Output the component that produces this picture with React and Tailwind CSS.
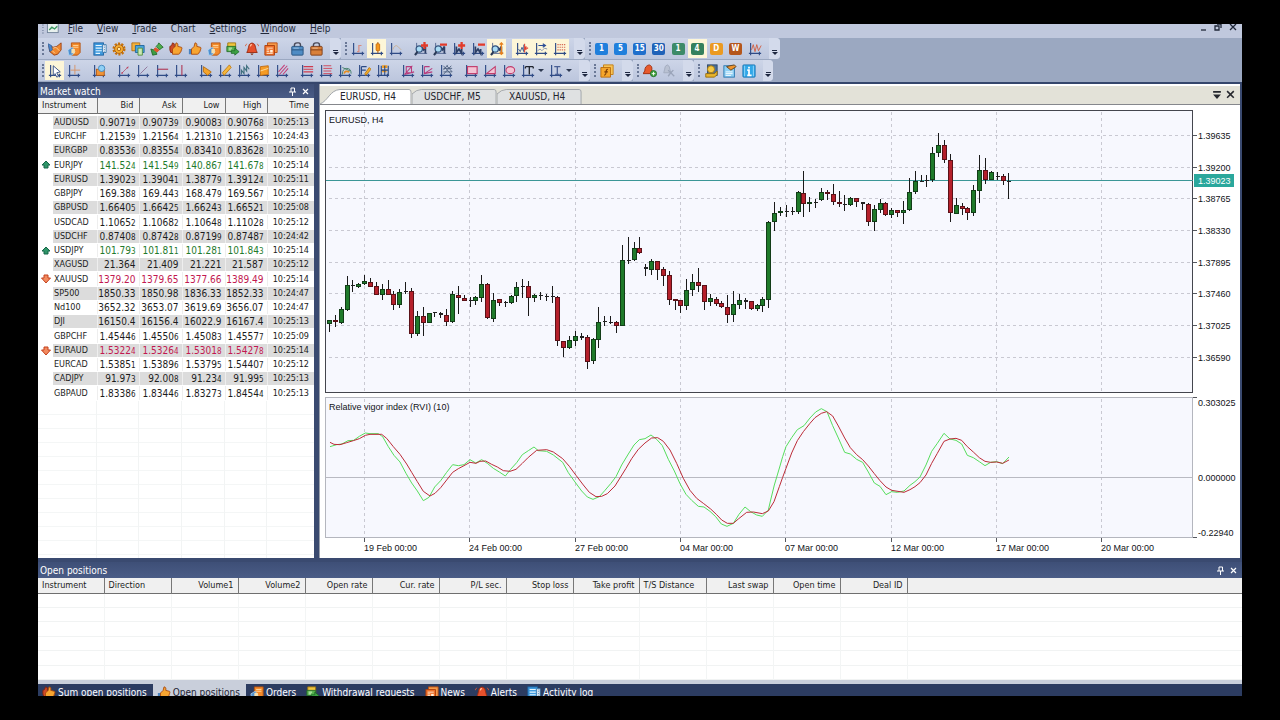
import { useState } from "react";
import clsx from "clsx";

const MENU = ["File", "View", "Trade", "Chart", "Settings", "Window", "Help"];

// symbol, bid, ask, low, high, time, direction, last digit drawn small
const QUOTES = [
  ["AUDUSD", "0.90719", "0.90739", "0.90083", "0.90768", "10:25:13", "", true],
  ["EURCHF", "1.21539", "1.21564", "1.21310", "1.21563", "10:24:43", "", true],
  ["EURGBP", "0.83536", "0.83554", "0.83410", "0.83628", "10:25:10", "", true],
  ["EURJPY", "141.524", "141.549", "140.867", "141.678", "10:25:14", "up", true],
  ["EURUSD", "1.39023", "1.39041", "1.38779", "1.39124", "10:25:11", "", true],
  ["GBPJPY", "169.388", "169.443", "168.479", "169.567", "10:25:14", "", true],
  ["GBPUSD", "1.66405", "1.66425", "1.66243", "1.66521", "10:25:08", "", true],
  ["USDCAD", "1.10652", "1.10682", "1.10648", "1.11028", "10:25:12", "", true],
  ["USDCHF", "0.87408", "0.87428", "0.87199", "0.87487", "10:24:42", "", true],
  ["USDJPY", "101.793", "101.811", "101.281", "101.843", "10:25:14", "up", true],
  ["XAGUSD", "21.364", "21.409", "21.221", "21.587", "10:25:12", "", false],
  ["XAUUSD", "1379.20", "1379.65", "1377.66", "1389.49", "10:25:14", "down", false],
  ["SP500", "1850.33", "1850.98", "1836.33", "1852.33", "10:24:47", "", false],
  ["Nd100", "3652.32", "3653.07", "3619.69", "3656.07", "10:24:47", "", false],
  ["DJI", "16150.4", "16156.4", "16022.9", "16167.4", "10:25:13", "", false],
  ["GBPCHF", "1.45446", "1.45506", "1.45083", "1.45577", "10:25:09", "", true],
  ["EURAUD", "1.53224", "1.53264", "1.53018", "1.54278", "10:25:14", "down", true],
  ["EURCAD", "1.53851", "1.53896", "1.53795", "1.54407", "10:25:12", "", true],
  ["CADJPY", "91.973", "92.008", "91.234", "91.995", "10:25:13", "", true],
  ["GBPAUD", "1.83386", "1.83446", "1.83273", "1.84544", "10:25:13", "", true],
];

const POSITION_COLS = [
  "Instrument", "Direction", "Volume1", "Volume2", "Open rate", "Cur. rate", "P/L sec.",
  "Stop loss", "Take profit", "T/S Distance", "Last swap", "Open time", "Deal ID",
];
const LEFT_COLS = ["Instrument", "Direction", "T/S Distance"];
const NARROW_COLS = ["Instrument", "Take profit"];

// bars: [color, body top, body bottom, high, low], measured in thirds from base
const CANDLES = [
  {
    base: 260,
    bars: [
      ["g", 181, 193, 181, 215], ["r", 181, 187, 165, 200], ["g", 148, 188, 140, 193], ["g", 76, 149, 48, 152],
      ["k", 75, 79, 60, 95], ["g", 73, 80, 70, 85], ["g", 64, 73, 45, 76], ["r", 65, 80, 55, 81],
      ["r", 79, 104, 67, 105], ["g", 87, 104, 73, 120], ["r", 87, 104, 60, 105], ["r", 103, 134, 93, 149],
      ["g", 97, 134, 88, 143], ["k", 94, 97, 67, 101], ["r", 93, 221, 84, 233], ["g", 169, 221, 152, 227],
      ["r", 169, 188, 140, 229], ["g", 160, 188, 158, 189], ["k", 157, 159, 157, 170], ["k", 159, 164, 157, 173],
      ["r", 166, 185, 147, 199], ["g", 102, 185, 93, 190], ["r", 105, 115, 77, 161], ["r", 115, 122, 105, 124],
      ["k", 121, 122, 110, 140], ["g", 112, 122, 108, 134], ["g", 72, 113, 46, 125], ["r", 73, 173, 69, 177],
      ["g", 121, 176, 100, 186], ["r", 117, 128, 116, 137], ["k", 127, 128, 123, 140], ["g", 107, 128, 105, 133],
      ["g", 81, 108, 66, 126], ["k", 78, 82, 57, 113], ["r", 79, 113, 64, 167], ["g", 105, 113, 102, 125],
      ["k", 106, 109, 96, 119], ["k", 109, 110, 102, 123], ["k", 109, 112, 79, 130], ["r", 112, 243, 107, 259],
    ],
  },
  {
    base: 220,
    bars: [
      ["r", 363, 383, 363, 410], ["g", 360, 384, 347, 387], ["g", 348, 362, 333, 377], ["k", 347, 353, 340, 361],
      ["r", 352, 425, 346, 448], ["g", 357, 422, 353, 433], ["g", 305, 359, 261, 383], ["k", 304, 305, 287, 319],
      ["k", 306, 308, 289, 312], ["r", 307, 317, 304, 338], ["g", 121, 317, 76, 319], ["k", 120, 122, 51, 132],
      ["g", 84, 119, 66, 122], ["r", 85, 99, 51, 101], ["k", 142, 146, 133, 167], ["g", 123, 149, 118, 164],
      ["r", 124, 149, 123, 179], ["r", 147, 167, 142, 199], ["r", 166, 239, 154, 256], ["r", 238, 243, 236, 269],
      ["r", 241, 258, 240, 278], ["g", 210, 258, 178, 269], ["g", 186, 211, 162, 227], ["r", 186, 197, 145, 217],
      ["r", 196, 246, 195, 269], ["g", 234, 246, 222, 257], ["r", 237, 251, 230, 258], ["r", 249, 262, 244, 265],
      ["r", 262, 284, 225, 309], ["g", 252, 284, 214, 305], ["g", 240, 254, 222, 268], ["k", 241, 245, 235, 266],
      ["r", 243, 266, 242, 270], ["g", 255, 266, 253, 274], ["g", 237, 258, 231, 277], ["g", 7, 239, 4, 264],
    ],
  },
  {
    base: 120,
    bars: [
      ["g", 279, 307, 246, 333], ["g", 273, 279, 261, 287], ["k", 274, 277, 255, 290], ["k", 273, 277, 262, 285],
      ["g", 216, 277, 213, 281], ["r", 219, 251, 153, 290], ["g", 245, 252, 232, 276], ["k", 246, 248, 238, 264],
      ["g", 216, 240, 204, 243], ["r", 216, 223, 210, 239], ["r", 222, 245, 192, 254], ["r", 246, 252, 213, 261],
      ["k", 252, 254, 225, 273], ["g", 235, 254, 232, 258], ["r", 235, 247, 233, 260], ["k", 247, 251, 245, 270],
      ["r", 251, 307, 250, 318], ["g", 268, 307, 255, 333], ["g", 250, 269, 237, 279], ["r", 250, 284, 245, 288],
      ["g", 270, 284, 265, 293], ["r", 271, 279, 270, 292], ["g", 270, 279, 243, 312], ["g", 216, 271, 175, 273],
      ["g", 182, 217, 154, 221], ["k", 182, 185, 165, 187], ["k", 179, 183, 165, 200], ["g", 99, 179, 80, 187],
      ["g", 75, 100, 40, 111], ["r", 76, 121, 60, 130], ["r", 121, 280, 102, 307], ["g", 256, 281, 233, 283],
      ["r", 258, 266, 248, 285], ["r", 265, 279, 261, 299], ["g", 211, 279, 195, 287], ["g", 151, 212, 105, 248],
      ["r", 151, 179, 114, 191], ["g", 156, 179, 154, 181], ["k", 169, 172, 157, 181], ["r", 169, 184, 162, 194],
      ["k", 182, 184, 160, 236],
    ],
  },
];

const BARS = CANDLES.flatMap(({ base, bars }) =>
  bars.map(([color, ...ys]) => [color, ...ys.map((y) => Math.round(base + y / 3))])
);

const RVI =
  "30,170 50,164 66,162 84,152 101,151 118,139 136,129 150,131 175,131 188,140 205,170 222,196 240,216 258,250 275,279 292,303 310,332 327,322 344,291 362,272 380,247 398,224 415,227 432,224 450,209 467,219 485,209 502,220 520,235 538,246 556,258 572,238 590,218 607,194 625,182 642,171 655,182 680,184 700,195 728,217 745,248 765,276 785,303 802,321 819,328 838,320 855,301 872,281 888,260 905,225 925,192 942,165 958,149 975,146 993,135 1010,148 1027,167 1045,208 1063,243 1080,281 1098,313 1115,331 1135,349 1152,351 1170,364 1187,380 1204,402 1221,409 1240,400 1257,373 1275,351 1292,365 1310,375 1327,379 1345,360 1352,330 1363,285 1372,255 1380,228 1388,200 1398,170 1415,143 1432,119 1452,107 1470,84 1487,66 1504,56 1521,65 1538,107 1555,144 1574,187 1591,192 1610,208 1628,217 1645,246 1663,279 1680,289 1698,314 1715,305 1732,307 1752,303 1770,286 1785,275 1800,261 1818,225 1835,184 1852,160 1872,130 1890,147 1908,151 1925,162 1942,196 1960,203 1978,215 1995,227 2012,217 2030,215 2048,221 2067,201";
const RVI_SIGNAL =
  "30,157 42,163 60,164 80,158 100,152 118,146 136,136 150,133 185,133 200,145 220,170 240,193 260,222 275,247 292,275 310,304 330,318 345,310 362,293 380,270 398,247 415,236 432,227 450,217 468,220 480,214 497,213 515,223 532,231 550,242 570,244 588,238 607,220 625,202 650,181 680,179 700,186 728,206 748,229 768,256 790,285 808,307 828,320 845,319 862,311 885,288 900,264 918,235 935,206 955,178 975,159 995,144 1013,143 1030,154 1050,180 1070,220 1090,265 1110,301 1130,325 1150,340 1172,357 1190,374 1205,390 1222,400 1240,400 1255,387 1280,367 1300,366 1327,371 1345,363 1362,335 1378,290 1388,262 1398,235 1415,189 1432,152 1450,125 1470,100 1485,83 1504,70 1520,65 1538,78 1555,108 1574,144 1591,173 1610,194 1628,209 1645,228 1663,251 1680,272 1698,291 1715,301 1752,307 1770,299 1785,290 1800,278 1818,255 1835,220 1852,190 1872,154 1890,147 1908,145 1925,151 1942,170 1960,186 1978,203 1995,214 2012,217 2030,216 2048,220 2067,210";

const PRICES = [
  [135, "1.39635"], [167, "1.39200"], [198, "1.38765"], [230, "1.38330"],
  [262, "1.37895"], [293, "1.37460"], [325, "1.37025"], [357, "1.36590"],
];
const DATES = [
  [364, "19 Feb 00:00"], [469, "24 Feb 00:00"], [575, "27 Feb 00:00"], [680, "04 Mar 00:00"],
  [785, "07 Mar 00:00"], [891, "12 Mar 00:00"], [996, "17 Mar 00:00"], [1101, "20 Mar 00:00"],
];

/* ---------- icons ---------- */

const Axes = () => <path d="M3 1v14M1 13h14M13 11v4" fill="none" stroke="#2f4b86" strokeWidth="1.3" />;
const Lens = () => (
  <>
    <path d="M3 1v14M1 13h14" fill="none" stroke="#4a5f8c" />
    <path d="M9 6l2 3 2-4v8" fill="none" stroke="#2c3f66" strokeWidth="2" />
    <circle cx="6" cy="8" r="3.6" fill="#a9dcf5" stroke="#33527d" strokeWidth="1.4" />
    <path d="M4 11l-3 4" stroke="#2b3a55" strokeWidth="2" />
  </>
);
const Thumb = () => (
  <path d="M4 14V8l3-3 1-4c2 0 2.500 1.500 2 4l4 1c1.500.500 1 2 0 2 1 1 .500 2-.500 2 .500 1 0 2-1 2 0 1-.500 2-2 2z" fill="#f7a531" stroke="#a9480c" />
);
const Doc = () => (
  <>
    <path d="M5 1h10v11l-3 3H5z" fill="#f28a2c" stroke="#b4500f" />
    <path d="M7 4h6M7 6h6" stroke="#ffd9a0" />
    <path d="M1 9l5-3 3 5-3 4H2z" fill="#4d8fd0" stroke="#b8dcf5" strokeWidth=".8" />
    <path d="M5 8h4v5H5z" fill="#f5dfae" />
  </>
);
const Bag = ({ fill, dark }) => (
  <>
    <path d="M5 6V4q0-3 3-3h2q2 0 2 3v2" fill="none" stroke="#4a4a58" strokeWidth="1.6" />
    <rect x="2" y="5" width="13" height="10" rx="1" fill={fill} stroke={dark} />
    <path d="M2 9h13" stroke={dark} />
    <path d="M4 7h6" stroke="#fff" opacity=".5" />
  </>
);

const ICONS = {
  handshake: (
    <>
      <path d="M1 4l5 2 4-1 5-4v8l-4 5-4 1-5-4z" fill="#f0882f" stroke="#9c3f10" />
      <path d="M0 2l4 2 1 5-3 2z" fill="#4a86cc" stroke="#285590" strokeWidth=".7" />
      <path d="M6 7l3-1 4 4M5 10l3 3" fill="none" stroke="#ffd59b" />
    </>
  ),
  doc: <Doc />,
  list: (
    <>
      <rect x="1" y="1" width="11" height="14" fill="#3f9ade" stroke="#1b609f" />
      <path d="M3 4h7M3 7h7M3 10h7M3 13h5" stroke="#e6f6ff" strokeWidth="1.4" />
      <path d="M11 3h4v9h-4z" fill="#f4f6fb" stroke="#3777ab" />
      <path d="M13 4v7" stroke="#3777ab" strokeDasharray="1 1" />
    </>
  ),
  gear: (
    <>
      <circle cx="8" cy="8" r="6.200" fill="none" stroke="#c77108" strokeWidth="2.500" strokeDasharray="2.400 1.500" />
      <circle cx="8" cy="8" r="5" fill="#f7b02f" stroke="#a8590a" />
      <circle cx="8" cy="8" r="2" fill="#ffe9a3" stroke="#a8590a" />
    </>
  ),
  copy: (
    <>
      <path d="M1 1h9v9H1z" fill="#f3b23c" stroke="#b06f10" />
      <path d="M5 4h10v8H5z" fill="#4aa4dd" stroke="#1d639c" />
      <path d="M8 7h5v8H8z" fill="#cbe8b4" stroke="#4d8d3c" />
    </>
  ),
  swap: (
    <>
      <path d="M10 1l5 5-2 1-2 2-4-4 2-2z" fill="#4fae4c" stroke="#246a2a" />
      <path d="M1 8l3 1 2-2 3 3-2 2 1 2-5 1z" fill="#3f9d45" stroke="#246a2a" />
      <path d="M6 6l5 3-3 3-4-3z" fill="#e3552d" />
    </>
  ),
  thumbs: (
    <>
      <path d="M1 9V5l2-1 1-3 2 1v3l3 1v6H2z" fill="#cf4a28" stroke="#86230c" />
      <Thumb />
    </>
  ),
  thumb: (
    <>
      <path d="M1 8h3v6H1z" fill="#4b83bf" />
      <Thumb />
    </>
  ),
  money: (
    <>
      <path d="M2 1h9v7H2z" fill="#f0c53d" stroke="#9b7410" />
      <path d="M1 5h10v6H1z" fill="#55b04d" stroke="#236b28" />
      <path d="M3 7h4M3 9h3" stroke="#e6ffd8" />
      <path d="M6 10h4V7l5 4-5 4v-2H6z" fill="#3da144" stroke="#176022" strokeWidth=".8" />
    </>
  ),
  bell: (
    <>
      <path d="M8 1q4 1 4 5l1 4 1 2H2l1-2 1-4q0-4 4-5z" fill="#e5502c" stroke="#96270d" />
      <path d="M6 5q0-2 2-2" fill="none" stroke="#ffc2a0" strokeWidth="1.300" />
      <path d="M6 13h4l-2 2z" fill="#7d2d10" />
      <path d="M2 2L0 5M14 2l2 3" stroke="#d85c37" />
    </>
  ),
  news: (
    <>
      <path d="M4 1h11v11H4z" fill="#f59a4a" stroke="#b8490f" />
      <path d="M1 4h11v11H1z" fill="#ef7029" stroke="#a83c0b" />
      <path d="M3 7h7M3 9h3M3 11h3M3 13h7" stroke="#fff0dc" />
      <path d="M7 9h3v3H7z" fill="#fff0dc" />
    </>
  ),
  bagBlue: <Bag fill="#4f8cc4" dark="#25507c" />,
  bagBrown: <Bag fill="#d9803a" dark="#7a3912" />,
  barChart: <><Axes /><path d="M7 11h2V4h3" fill="none" stroke="#d98b7f" strokeWidth="1.400" /></>,
  candleChart: <><Axes /><path d="M9 0v13" stroke="#9c4c05" /><rect x="7" y="2" width="4" height="8" rx="1" fill="#f6981c" stroke="#c76a08" /></>,
  lineChart: <><Axes /><path d="M4 9q3-7 6-4l4 4" fill="none" stroke="#c9ae90" /></>,
  zoomIn: <><Lens /><path d="M12 0v8M8 4h8" stroke="#e23b2b" strokeWidth="2.600" /></>,
  zoomOut: <><Lens /><path d="M8 3h8" stroke="#e23b2b" strokeWidth="2.600" /></>,
  barsIn: <><Axes /><path d="M5 5v7l3-4 3 5V8" fill="none" stroke="#2c3f66" strokeWidth="2" /><path d="M11 0v8M7 4h8" stroke="#e23b2b" strokeWidth="2.600" /></>,
  barsOut: <><Axes /><path d="M5 5v7l3-4 3 5V8" fill="none" stroke="#2c3f66" strokeWidth="2" /><path d="M8 3h8" stroke="#e23b2b" strokeWidth="2.600" /></>,
  zoomFit: <><Lens /><path d="M13 1v13M11 3l2-2 2 2M11 12l2 2 2-2" fill="none" stroke="#e8801d" strokeWidth="1.500" /></>,
  shift: <><Axes /><path d="M4 8l2 3 2-5 2 5V3" fill="none" stroke="#35528c" /><path d="M11 2v10M15 7h-4M13 5l-2 2 2 2" fill="none" stroke="#df4030" strokeWidth="1.200" /></>,
  scroll: <><Axes /><path d="M4 10l3-2 2 2 3-3 3 1" fill="none" stroke="#7b8db4" /><path d="M5 4h7M10 2l3 2-3 2" fill="none" stroke="#2b4d95" strokeWidth="1.400" /></>,
  grid: <><Axes /><path d="M5 3h10M5 6h10M5 9h10" stroke="#d56a55" strokeWidth="1.300" strokeDasharray="1.500 1" /></>,
  indicator: <><Axes /><path d="M4 9l2-6 2 8 2-8 2 7 3-6" fill="none" stroke="#d05a3d" /></>,
  cursor: <><Axes /><path d="M6 2l8 7-4 1 2 4-2 1-2-4-2 2z" fill="#fff" stroke="#2c467f" /></>,
  cross: <><Axes /><path d="M9 1v11M4 7h11" stroke="#d99060" /></>,
  object: <><Axes /><rect x="5" y="6" width="9" height="7" fill="#f19436" stroke="#b35a10" /><circle cx="11" cy="5" r="3.600" fill="#8fd0f5" stroke="#3f84bb" /></>,
  trend: <><Axes /><path d="M5 11l8-8" stroke="#b0607c" /><circle cx="6" cy="10" r="1" fill="#c04560" /><circle cx="12" cy="4" r="1" fill="#c04560" /></>,
  ray: <><Axes /><path d="M5 11l8-8" stroke="#8b6f95" /></>,
  hline: <><Axes /><path d="M3 6h12" stroke="#b03d5a" strokeWidth="1.300" /></>,
  vline: <><Axes /><path d="M9 1v12" stroke="#b03d5a" strokeWidth="1.300" /></>,
  pencil: <><Axes /><path d="M5 3l9 6-4 4-5-4z" fill="#f5a42b" stroke="#b36a0c" /></>,
  channel: <><Axes /><path d="M5 10l8-9 2 3-8 9z" fill="#f5b73d" stroke="#c07a10" /></>,
  stdev: <><Axes /><path d="M5 12V7l3 4V4l3 4V2l3 4" fill="none" stroke="#3e6e7d" strokeWidth="1.300" /></>,
  orangeBox: <><Axes /><path d="M5 3l9-1v10l-9 1z" fill="#f59b24" stroke="#c1690c" /><path d="M5 8l9-3" stroke="#ffe0a5" /></>,
  pitchfork: <><Axes /><path d="M4 9l7-8M5 12l9-10M9 12l6-7" stroke="#c43f78" strokeWidth="1.200" /></>,
  fibo: <><Axes /><path d="M4 3h11M4 6h11M4 9h11" stroke="#cf3a4e" strokeWidth="1.300" /></>,
  fiboExt: <><Axes /><path d="M5 2h9M5 5h10M5 8h9M5 11h10" stroke="#cf3a4e" /></>,
  fiboArc: <><Axes /><path d="M5 12q0-7 5-7t5 6M5 4l9 4" fill="none" stroke="#3f7d63" /><path d="M7 11q1-4 6-2" fill="none" stroke="#e78c21" strokeWidth="2" /></>,
  fiboFan: <><Axes /><path d="M5 3h6M5 7h5M5 3v9" stroke="#2a4a86" strokeWidth="1.400" /><path d="M9 11l5-7 2 2-6 7z" fill="#f5b02b" stroke="#b8750e" /></>,
  fiboTime: <><Axes /><path d="M7 3h6M7 8h5" stroke="#f39c1f" strokeWidth="3" /><path d="M6 2v11M10 2v11M14 2v11M6 7h8" stroke="#26467f" strokeWidth="1.200" /></>,
  gannFan: <><Axes /><path d="M4 12L13 2M4 12l11-3M6 3h6v7H6z" fill="none" stroke="#b83b7c" strokeWidth="1.200" /></>,
  gannLine: <><Axes /><path d="M5 3h6M5 3v8l9-6M5 11l9-2" fill="none" stroke="#b83b7c" strokeWidth="1.200" /></>,
  gannGrid: <><Axes /><path d="M5 2l9 10M9 2l6 7M14 2l-9 10M10 1l-5 6M5 5h10M5 9h10" stroke="#4a5e7d" /></>,
  rect: <><Axes /><rect x="4" y="3" width="11" height="8" fill="#f3c3d4" stroke="#c13a6a" strokeWidth="1.300" /></>,
  triangle: <><Axes /><path d="M4 11L14 3v8z" fill="#f3c3d4" stroke="#c13a6a" strokeWidth="1.200" /></>,
  ellipse: <><Axes /><ellipse cx="9.500" cy="7" rx="5" ry="4" fill="#f3c3d4" stroke="#c13a6a" strokeWidth="1.200" /></>,
  textTool: <><Axes /><path d="M5 3h9M9.500 3v9M5 3v2M14 3v2" stroke="#20242e" strokeWidth="1.500" /></>,
  markTool: <><Axes /><path d="M6 3h7M9.500 3v9M7 12h5" stroke="#4a5f94" strokeWidth="1.500" /></>,
  script: (
    <>
      <path d="M4 1h11v11H4z" fill="#f8c457" stroke="#c07c10" />
      <path d="M1 4h11v11H1z" fill="#f5a62c" stroke="#b86a0a" />
      <path d="M9 6q-2 0-2 3t-2 4M5 9h4" fill="none" stroke="#7a3b05" strokeWidth="1.300" />
    </>
  ),
  alertAdd: (
    <>
      <path d="M7 1q4 1 3 6l2 4H0l2-3q0-6 5-7z" fill="#e85a2d" stroke="#9c2c0d" />
      <circle cx="12" cy="11" r="3.500" fill="#46a843" stroke="#1f6a26" />
      <path d="M12 9v4M10 11h4" stroke="#fff" />
    </>
  ),
  alertOff: (
    <>
      <path d="M6 1q3 1 3 5l1 4H2l1-4q0-4 3-5z" fill="#b9c1d2" stroke="#a0a9bd" />
      <path d="M7 7l3 3 3-3M10 10l4 4M10 10l-3 4" fill="none" stroke="#9aa4b9" strokeWidth="1.500" />
    </>
  ),
  user: (
    <>
      <rect x="4" y="1" width="11" height="12" fill="#4d6f95" stroke="#2b4669" />
      <circle cx="8" cy="6" r="4" fill="#f5c945" stroke="#a8780c" />
      <path d="M2 11h10l3-3v4l-3 3H2z" fill="#e9b52c" stroke="#94690b" />
    </>
  ),
  report: (
    <>
      <rect x="1" y="2" width="12" height="13" fill="#8fd0f5" stroke="#2573ad" />
      <path d="M3 9h8M3 11h8M3 13h6" stroke="#fff" />
      <path d="M4 3l5 4 6-4-2-2-5 1z" fill="#f0952f" stroke="#5b4020" />
    </>
  ),
  info: (
    <>
      <rect x="1" y="1" width="14" height="14" rx="1" fill="#31a7e8" stroke="#1b76b5" />
      <path d="M3 2v12M13 2v12" stroke="#9adcfb" />
      <path d="M8 3v2M6 7h2v6M6 13h5" fill="none" stroke="#fff" strokeWidth="2" />
    </>
  ),
};

function Icon({ name }) {
  return (
    <svg viewBox="0 0 16 16" className="block size-[14px] shrink-0" aria-hidden="true">
      {ICONS[name]}
    </svg>
  );
}

/* ---------- toolbars ---------- */

const PERIODS = [
  ["1", "bg-[#1f7fdc]"], ["5", "bg-[#1f7fdc]"], ["15", "bg-[#1f6fcc]"], ["30", "bg-[#1f62b8]"],
  ["1", "bg-[#3c8a68]"], ["4", "bg-[#35805c]"], ["D", "bg-[#eb9a22]"], ["W", "bg-[#b4561c]"],
];

function ToolButton({ name, active, menu, children }) {
  return (
    <button
      type="button"
      aria-label={name}
      className={clsx("flex h-[19px] items-center justify-center", menu ? "w-7 gap-[3px]" : "w-[19px]", active && "bg-[#fdf6d8]")}
    >
      {children || <Icon name={name} />}
      {menu && <span className="border-x-[3px] border-t-[3px] border-x-transparent border-t-[#2d3850]" />}
    </button>
  );
}

function Toolbar({ width, label, children }) {
  return (
    <div role="toolbar" aria-label={label} className={clsx("flex h-[21px] shrink-0 rounded-r bg-linear-to-b from-[#cdd5e8] to-[#bcc6dd]", width)}>
      <span className="my-1 ml-1 mr-px w-0 border-l-2 border-dotted border-[#6a7896]" />
      <div className="flex flex-1 items-center justify-between">{children}</div>
      <button type="button" aria-label={label + " options"} className="ml-[5px] flex w-[11px] flex-col items-center justify-end gap-px rounded-r bg-[#d3daeb] pb-1">
        <span className="h-px w-[5px] bg-[#1e2740]" />
        <span className="border-x-[3px] border-t-[3px] border-x-transparent border-t-[#1e2740]" />
      </button>
    </div>
  );
}

function Group({ names, active = [] }) {
  return (
    <div className="flex">
      {names.map((n) => (
        <ToolButton key={n} name={n} active={active.includes(n)} />
      ))}
    </div>
  );
}

function Toolbars() {
  return (
    <div className="flex shrink-0 flex-col gap-px border-b-2 border-[#35466c] bg-[#9ba8c1] pb-px">
      <div className="flex">
        <Toolbar width="w-[303px]" label="Trade">
          <Group names={["handshake", "doc"]} />
          <Group names={["list", "gear", "copy", "swap", "thumbs", "thumb", "doc", "money", "bell", "news"]} />
          <Group names={["bagBlue", "bagBrown"]} />
        </Toolbar>
        <Toolbar width="w-[244px]" label="Chart">
          <Group names={["barChart", "candleChart", "lineChart"]} active={["candleChart"]} />
          <Group names={["zoomIn", "zoomOut", "barsIn", "barsOut", "zoomFit"]} active={["zoomFit"]} />
          <Group names={["shift", "scroll", "grid"]} active={["shift", "scroll", "grid"]} />
        </Toolbar>
        <Toolbar width="w-[195px]" label="Period">
          {PERIODS.map(([text, color], i) => (
            <ToolButton key={i} name={"Period " + text} active={i === 5}>
              <span className={clsx("flex h-3 w-[13px] items-center justify-center rounded-xs text-[8px] font-bold leading-none text-white", color)}>
                {text}
              </span>
            </ToolButton>
          ))}
          <ToolButton name="indicator" />
        </Toolbar>
      </div>
      <div className="flex">
        <Toolbar width="w-[552px]" label="Drawing">
          <Group names={["cursor", "cross"]} active={["cursor"]} />
          <Group names={["object"]} />
          <Group names={["trend", "ray", "hline", "vline"]} />
          <Group names={["pencil", "channel", "stdev", "orangeBox", "pitchfork"]} />
          <Group names={["fibo", "fiboExt", "fiboArc", "fiboFan", "fiboTime"]} />
          <Group names={["gannFan", "gannLine", "gannGrid"]} />
          <div className="flex">
            <ToolButton name="rect" />
            <ToolButton name="triangle" />
            <ToolButton name="ellipse" />
            <ToolButton name="textTool" menu />
            <ToolButton name="markTool" menu />
          </div>
        </Toolbar>
        <Toolbar width="w-[43px]" label="Scripts">
          <Group names={["script"]} />
        </Toolbar>
        <Toolbar width="w-[61px]" label="Alerts">
          <Group names={["alertAdd", "alertOff"]} />
        </Toolbar>
        <Toolbar width="w-[79px]" label="Account">
          <Group names={["user", "report", "info"]} />
        </Toolbar>
      </div>
    </div>
  );
}

function MenuBar() {
  return (
    <header className="flex h-[14px] shrink-0 items-start justify-between bg-[#c0c8dd]">
      <nav className="flex pl-1 text-[10px] leading-[8px]">
        <svg viewBox="0 0 20 10" className="mr-2 h-[10px] w-[18px]" aria-hidden="true">
          <path d="M1 0v10" stroke="#7a87a3" strokeWidth="2" strokeDasharray="1 2" />
          <rect x="6" y="-4" width="12" height="13" fill="#e8f0ee" stroke="#6f8098" />
          <path d="M8 6l3-3 3 2 3-3" fill="none" stroke="#3b9960" strokeWidth="1.500" />
        </svg>
        {MENU.map((m) => (
          <button key={m} type="button" className="mr-[14px] whitespace-nowrap">
            {m === "Chart" ? m : <><u>{m[0]}</u>{m.slice(1)}</>}
          </button>
        ))}
      </nav>
      <div className="flex gap-[6px] pr-1">
        {[["Minimize", "M2 6h5"], ["Restore", "M3 0h4v4M1 2h4v4H1z"], ["Close", "M1 0l6 6M7 0L1 6"]].map(([name, d]) => (
          <button key={name} type="button" aria-label={name}>
            <svg viewBox="0 0 9 9" className="block size-[9px]">
              <path d={d} fill="none" stroke="#1f2738" strokeWidth="1.300" />
            </svg>
          </button>
        ))}
      </div>
    </header>
  );
}

function PanelTitle({ children, className }) {
  return (
    <div className={clsx("flex shrink-0 items-center bg-linear-to-b from-[#3e4f77] to-[#4a5c86] pl-[2px] pr-1 text-[10px] text-white", className)}>
      <h2 className="flex-1">{children}</h2>
      <button type="button" aria-label="Pin" className="mr-1">
        <svg viewBox="0 0 9 9" className="block size-[9px]">
          <path d="M3 1h3.500v4M3 1v4M1 5h7M4.500 5v4" fill="none" stroke="#fff" />
        </svg>
      </button>
      <button type="button" aria-label="Close">
        <svg viewBox="0 0 9 9" className="block size-[9px]">
          <path d="M2 2l5 5M7 2L2 7" stroke="#fff" strokeWidth="1.200" />
        </svg>
      </button>
    </div>
  );
}

/* ---------- market watch ---------- */

function Arrow({ dir }) {
  if (!dir) return null;
  const up = dir === "up";
  return (
    <svg viewBox="0 0 10 10" className="block size-[10px]" role="img" aria-label={dir}>
      <path
        d={up ? "M5 1l4 4H7v3H3V5H1z" : "M3 1h4v3h2.500L5 9 .5 4H3z"}
        fill={up ? "#2f9668" : "#f28a5f"}
        stroke={up ? "#17674a" : "#c4401c"}
      />
    </svg>
  );
}

function Price({ value, small }) {
  if (!small) return value;
  return <>{value.slice(0, -1)}<span className="text-[8px] leading-none">{value.slice(-1)}</span></>;
}

function MarketWatch() {
  const cols = ["Bid", "Ask", "Low", "High", "Time"];
  return (
    <section className="flex w-[276px] shrink-0 flex-col bg-white">
      <PanelTitle className="h-[14px]">Market watch</PanelTitle>
      <table className="w-full table-fixed border-collapse text-[9px] leading-[11px] text-[#1c1c1c]">
        <colgroup>
          <col className="w-[15px]" />
          <col className="w-[44px]" />
          <col className="w-[42px]" />
          <col className="w-[43px]" />
          <col className="w-[43px]" />
          <col className="w-[42px]" />
          <col />
        </colgroup>
        <thead>
          <tr className="h-[15px] border-b border-[#6f6f6f] bg-[#f0f0f0]">
            <th colSpan={2} className="border-r border-[#777] p-0 pl-1 pt-px text-left font-normal">Instrument</th>
            {cols.map((c) => (
              <th key={c} className="border-r border-[#777] p-0 pr-[5px] pt-px text-right font-normal last:border-r-0">{c}</th>
            ))}
          </tr>
        </thead>
        <tbody className="before:block before:h-[2px]">
          {QUOTES.map(([symbol, bid, ask, low, high, time, dir, small], i) => (
            <tr key={symbol} className={clsx(i % 4 === 3 ? "h-[15px]" : "h-[14px]", dir === "up" && "text-[#1f7a2c]", dir === "down" && "text-[#c2184f]")}>
              <td className="p-0 pl-[3px]"><Arrow dir={dir} /></td>
              <td className={clsx("border-y border-white p-0 pl-px text-[#1c1c1c]", i % 2 === 0 && "bg-[#dcdcdc]")}>{symbol}</td>
              {[bid, ask, low, high].map((v, k) => (
                <td key={k} className={clsx("border-y border-l border-y-white border-l-[#eeeeee] p-0 pr-[3px] text-right text-[10px]", i % 2 === 0 && "bg-[#dcdcdc]")}>
                  <Price value={v} small={small} />
                </td>
              ))}
              <td className={clsx("border-y border-l border-y-white border-l-[#eeeeee] p-0 pr-[5px] text-right text-[#1c1c1c]", i % 2 === 0 && "bg-[#dcdcdc]")}>{time}</td>
            </tr>
          ))}
        </tbody>
      </table>
      <div className="flex flex-1 bg-[repeating-linear-gradient(to_bottom,#fff_0_13px,#f4f6f6_13px_14px)]">
        <span className="w-[59px] border-r border-[#f2f4f4]" />
        <span className="w-[42px] border-r border-[#f2f4f4]" />
        <span className="w-[43px] border-r border-[#f2f4f4]" />
        <span className="w-[43px] border-r border-[#f2f4f4]" />
        <span className="w-[42px] border-r border-[#f2f4f4]" />
      </div>
    </section>
  );
}

/* ---------- chart ---------- */

const BODY = { g: "#1f7a2a", r: "#b5202b", k: "#222" };

function PriceChart() {
  return (
    <svg
      viewBox="320 106 920 450"
      preserveAspectRatio="xMinYMin meet"
      className="mt-px block min-h-0 w-full flex-1 bg-white font-['Liberation_Sans',sans-serif] text-[9px]"
      role="img"
      aria-label="EURUSD, H4 with relative vigor index"
    >
      <g fill="#f7f8fe">
        <rect x="325.5" y="110.5" width="867" height="282" stroke="#44464e" />
        <rect x="325.5" y="397.5" width="867" height="140" stroke="#b4b6be" />
      </g>

      <g stroke="#c9c9d2" strokeDasharray="3 3">
        {PRICES.map(([y]) => <path key={y} d={`M329 ${y + 0.5}H1192`} />)}
        {DATES.map(([x]) => <path key={x} d={`M${x + 0.5} 112V392M${x + 0.5} 399V537`} />)}
      </g>
      <path d="M326 477.5H1192" stroke="#b9bac2" />
      <path d="M326 180.5H1193" stroke="#3b9696" />

      {BARS.map(([color, top, bottom, high, low], i) => {
        const x = Math.round(329 + i * 5.857);
        return (
          <g key={i} shapeRendering="crispEdges">
            <path d={`M${x + 0.5} ${high}V${low}`} stroke="#1a1a1a" />
            {color === "k" ? (
              <rect x={x - 1} y={top} width="4" height={Math.max(1, bottom - top)} fill="#222" />
            ) : (
              <rect x={x - 1.5} y={top + 0.5} width="4" height={Math.max(1, bottom - top - 1)} fill={BODY[color]} stroke={color === "g" ? "#123d17" : "#5a1218"} />
            )}
          </g>
        );
      })}

      <g transform="translate(320 390) scale(.33333)" fill="none" strokeWidth="3">
        <polyline points={RVI} stroke="#55dd5b" />
        <polyline points={RVI_SIGNAL} stroke="#bb2b37" />
      </g>

      <g stroke="#55575e">
        {PRICES.map(([y]) => <path key={y} d={`M1193 ${y + 0.5}h4`} />)}
        {DATES.map(([x]) => <path key={x} d={`M${x + 0.5} 538v4`} />)}
        <path d="M1193 397.5h4M1193 537.5h4" />
      </g>

      <g fill="#111318">
        <text x="329" y="123">EURUSD, H4</text>
        <text x="329" y="410">Relative vigor index (RVI) (10)</text>
        {PRICES.map(([y, label]) => <text key={y} x="1198" y={y + 4}>{label}</text>)}
        {DATES.map(([x, label]) => <text key={x} x={x} y="551">{label}</text>)}
        <text x="1198" y="406">0.303025</text>
        <text x="1198" y="481">0.000000</text>
        <text x="1198" y="536">-0.22940</text>
      </g>
      <rect x="1194" y="174" width="40" height="13" fill="#2aa79c" />
      <text x="1198" y="184" fill="#fff">1.39023</text>
    </svg>
  );
}

function ChartTabs() {
  const [current, setCurrent] = useState("EURUSD, H4");
  return (
    <div className="flex h-[19px] shrink-0 items-end border-b border-[#85878c] bg-[#e3e2d8]">
      {["EURUSD, H4", "USDCHF, M5", "XAUUSD, H4"].map((t, i) => (
        <button
          key={t}
          type="button"
          onClick={() => setCurrent(t)}
          className={clsx("relative h-[15px] text-left text-[10px] leading-[12px] text-[#22242c]", i === 0 ? "w-[92px] pl-5" : "w-[85px] pl-3")}
        >
          <svg viewBox="0 0 92 15" preserveAspectRatio="none" className="absolute inset-0 size-full" aria-hidden="true">
            <path
              d={i === 0 ? "M0 15C8 12 10 1 20 .500H89Q91 .500 91 3V15" : "M0 15V5Q5 .500 10 .500H89Q91 .500 91 3V15"}
              fill={current === t ? "#fff" : "#dfe1e2"}
              stroke="#a1a5aa"
            />
          </svg>
          <span className="relative">{t}</span>
        </button>
      ))}
      <div className="ml-auto flex gap-1 pb-1 pr-1">
        <button type="button" aria-label="Chart list">
          <svg viewBox="0 0 9 9" className="block size-[10px]"><path d="M1 1h7v1.500H1zM1 4h7L4.500 8z" fill="#26282e" /></svg>
        </button>
        <button type="button" aria-label="Close chart">
          <svg viewBox="0 0 9 9" className="block size-[10px]"><path d="M1 1l6 6M7 1L1 7" stroke="#26282e" strokeWidth="1.400" /></svg>
        </button>
      </div>
    </div>
  );
}

/* ---------- open positions ---------- */

const DOCK_TABS = [
  ["thumbs", "Sum open positions"], ["thumb", "Open positions"], ["doc", "Orders"], ["money", "Withdrawal requests"],
  ["news", "News"], ["bell", "Alerts"], ["list", "Activity log"],
];

function OpenPositions() {
  const [tab, setTab] = useState("Open positions");
  return (
    <section className="flex h-[138px] shrink-0 flex-col overflow-hidden border-t-4 border-[#3a4a70]">
      <PanelTitle className="h-4">Open positions</PanelTitle>
      <div className="h-[102px] shrink-0 bg-white">
        <table className="h-[102px] w-full table-fixed border-collapse text-[9px] leading-[11px] text-[#1c1c1c]">
          <thead>
            <tr className="h-[15px] border-b border-[#6f6f6f] bg-[#f0f0f0]">
              {POSITION_COLS.map((c) => (
                <th
                  key={c}
                  className={clsx(
                    "whitespace-nowrap border-r border-[#777] p-0 pt-px font-normal",
                    NARROW_COLS.includes(c) ? "w-[66px]" : "w-[67px]",
                    LEFT_COLS.includes(c) ? "pl-1 text-left" : "pr-1 text-right"
                  )}
                >
                  {c}
                </th>
              ))}
              <th className="p-0" />
            </tr>
          </thead>
          <tbody>
            {[1, 2, 3, 4, 5, 6].map((r) => (
              <tr key={r} className="border-b border-[#f1f3f3]">
                {POSITION_COLS.map((c) => <td key={c} className="border-r border-[#f3f5f5] p-0" />)}
                <td className="p-0" />
              </tr>
            ))}
          </tbody>
        </table>
      </div>
      <div className="flex h-4 shrink-0 border-t-4 border-[#c9cfdb] bg-[#2c3c61]">
        {DOCK_TABS.map(([icon, name]) => (
          <button
            key={name}
            type="button"
            onClick={() => setTab(name)}
            className={clsx("flex h-[18px] items-center gap-[2px] whitespace-nowrap pl-1 pr-[6px] text-[10px] leading-[10px]", tab === name ? "bg-[#c9cfdb] text-[#1d2333]" : "text-white")}
          >
            <Icon name={icon} />
            {name}
          </button>
        ))}
      </div>
    </section>
  );
}

export default function App() {
  return (
    <div className="h-screen bg-black px-[38px] py-6 font-['DejaVu_Sans_Condensed','DejaVu_Sans',sans-serif]">
      <div className="flex h-full flex-col overflow-hidden bg-[#3a4a70] text-[#22293a]">
        <MenuBar />
        <Toolbars />
        <main className="flex min-h-0 flex-1 gap-[5px]">
          <MarketWatch />
          <section className="flex min-w-0 flex-1 flex-col border-l border-r-2 border-l-[#9aa0ac] border-r-[#3a4a70] bg-white pt-[2px]">
            <ChartTabs />
            <PriceChart />
          </section>
        </main>
        <OpenPositions />
      </div>
    </div>
  );
}
